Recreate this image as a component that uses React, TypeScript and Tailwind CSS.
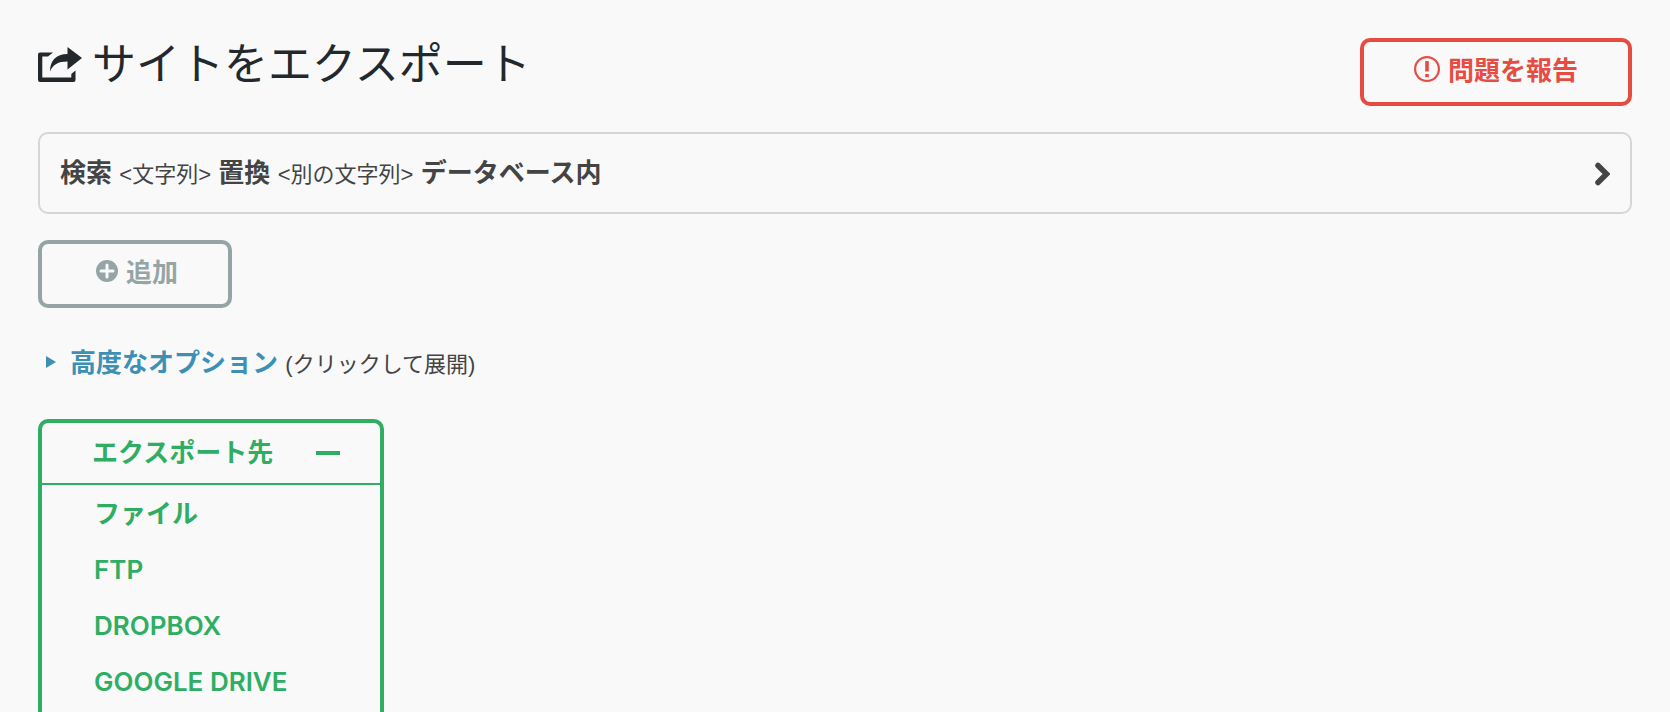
const destinations: string[] = ["ファイル", "FTP", "DROPBOX", "GOOGLE DRIVE"]

function ExportIcon() {
    return (
        <svg aria-hidden="true" width="44" height="36" viewBox="0 0 44 36" className="mt-0.5" fill="currentColor">
            <path d="M2 5.5H15L10 9.5H4.3V30.5H33.3V27L37.5 23.5V33Q37.5 35 35.5 35H2Q0 35 0 33V7.5Q0 5.5 2 5.5Z" />
            <path d="M29.500 0L44 11L29.500 22.500V14.500C20 14.500 15 17.500 12 24.500C12 14 18 7 29.500 7Z" />
        </svg>
    )
}

function AlertIcon() {
    return (
        <svg aria-hidden="true" width="26" height="26" viewBox="0 0 26 26" className="mb-1" fill="currentColor">
            <circle cx="13" cy="13" r="11.9" fill="none" stroke="currentColor" strokeWidth="2.2" />
            <rect x="11.200" y="5" width="3.600" height="10.500" />
            <rect x="11.200" y="18" width="3.600" height="3.200" />
        </svg>
    )
}

function PlusIcon() {
    return (
        <svg aria-hidden="true" width="22" height="22" viewBox="0 0 22 22" className="mb-1" fill="currentColor">
            <circle cx="11" cy="11" r="11" />
            <path d="M11 5V17M5 11H17" stroke="#f9f9f9" strokeWidth="3" strokeLinecap="round" />
        </svg>
    )
}

function ChevronIcon() {
    return (
        <svg aria-hidden="true" width="16" height="24" viewBox="0 0 16 24" fill="none" stroke="currentColor" strokeWidth="5.5" strokeLinecap="round">
            <path d="M4 3.500L12.500 12L4 20.500" />
        </svg>
    )
}

function App() {
    return (
        <main className="h-screen overflow-hidden bg-[#f9f9f9] px-[38px] pt-[38px] flex flex-col items-start font-['Inter','Noto_Sans_CJK_JP',sans-serif] text-[26px] leading-[36px] text-[#444444]">
            <header className="w-full flex justify-between items-start">
                <h1 className="flex items-center gap-[10px] text-[44px] leading-[52px] text-[#23282d]">
                    <ExportIcon />
                    サイトをエクスポート
                </h1>
                <button type="button" className="h-[68px] w-[272px] pb-0.5 flex items-center justify-center gap-2 rounded-[10px] border-4 border-[#e74c43] font-bold text-[#e74c43]">
                    <AlertIcon />
                    問題を報告
                </button>
            </header>

            <button type="button" className="mt-[26px] w-full h-[82px] px-5 pt-0.5 flex items-center justify-between rounded-[10px] border-2 border-[#d6d6d6] text-left">
                <span>
                    <strong className="font-bold">検索</strong>{" "}
                    <span className="font-['Liberation_Sans','Noto_Sans_CJK_JP',sans-serif] text-[22px]">&lt;文字列&gt;</span>{" "}
                    <strong className="font-bold">置換</strong>{" "}
                    <span className="font-['Liberation_Sans','Noto_Sans_CJK_JP',sans-serif] text-[22px]">&lt;別の文字列&gt;</span>{" "}
                    <strong className="font-bold">データベース内</strong>
                </span>
                <ChevronIcon />
            </button>

            <button type="button" className="mt-[26px] h-[68px] w-[194px] pb-0.5 pl-1 flex items-center justify-center gap-2 rounded-[10px] border-4 border-[#95a5a6] font-bold text-[#95a5a6]">
                <PlusIcon />
                追加
            </button>

            <div className="mt-[37px] pl-2 flex items-center">
                <svg aria-hidden="true" width="10" height="12" viewBox="0 0 10 12" className="mr-[14px] mb-1 text-[#3d90b4]" fill="currentColor">
                    <path d="M0 0L10 6L0 12Z" />
                </svg>
                <p>
                    <a href="#advanced" className="font-bold text-[#3d90b4]">高度なオプション</a>{" "}
                    <span className="font-['Liberation_Sans','Noto_Sans_CJK_JP',sans-serif] text-[22px]">(クリックして展開)</span>
                </p>
            </div>

            <div className="mt-[36px] w-[346px] flex-1 rounded-t-[10px] border-4 border-b-0 border-[#2fae63] font-semibold text-[#2fae63]">
                <button type="button" aria-expanded="true" className="w-full h-[62px] pl-[50px] pr-10 flex items-center justify-between border-b-2 border-[#2fae63] font-bold">
                    エクスポート先
                    <span className="w-6 h-1 bg-[#2fae63]" />
                </button>
                <ul className="pt-px">
                    {destinations.map((name) => (
                        <li key={name}>
                            <a href="#export" className="h-14 pl-[52px] flex items-center">{name}</a>
                        </li>
                    ))}
                </ul>
            </div>
        </main>
    )
}

export default App
